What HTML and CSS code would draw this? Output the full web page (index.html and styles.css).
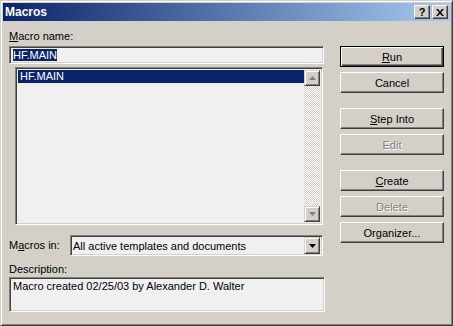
FILE: index.html
```html
<!DOCTYPE html>
<html lang="en">
<head>
  <meta charset="UTF-8">
  <title>Macros</title>
  <link rel="stylesheet" href="styles.css">
</head>
<body>
  <div class="window">
    <div class="titlebar">
      <span class="title">Macros</span>
      <div class="title-buttons">
        <span class="tbtn help">?</span>
        <span class="tbtn">
          <svg width="8" height="7" viewBox="0 0 8 7"><path d="M0 0h2l2 2.5L6 0h2L5 3.5 8 7H6L4 4.5 2 7H0l3-3.5z" fill="#000"/></svg>
        </span>
      </div>
    </div>

    <div class="content">
      <div class="left">
        <div class="label"><u>M</u>acro name:</div>
        <div class="field name-field"><span class="sel">HF.MAIN</span></div>

        <div class="field listbox">
          <div class="items">
            <div class="item selected">HF.MAIN</div>
          </div>
          <div class="scrollbar">
            <span class="sbtn">
              <svg width="7" height="4" viewBox="0 0 7 4"><path d="M3.5 0 7 4H0z" fill="#808080"/></svg>
            </span>
            <span class="track"></span>
            <span class="sbtn">
              <svg width="7" height="4" viewBox="0 0 7 4"><path d="M0 0h7L3.5 4z" fill="#808080"/></svg>
            </span>
          </div>
        </div>

        <div class="combo-row">
          <span class="label">M<u>a</u>cros in:</span>
          <div class="field combo">
            <span class="combo-text">All active templates and documents</span>
            <span class="sbtn">
              <svg width="7" height="4" viewBox="0 0 7 4"><path d="M0 0h7L3.5 4z" fill="#000"/></svg>
            </span>
          </div>
        </div>

        <div class="label desc-label">Description:</div>
        <div class="field desc">Macro created 02/25/03 by Alexander D. Walter</div>
      </div>

      <div class="right">
        <div class="group">
          <span class="btn default"><u>R</u>un</span>
          <span class="btn">Cancel</span>
        </div>
        <div class="group">
          <span class="btn"><u>S</u>tep Into</span>
          <span class="btn disabled">Edit</span>
        </div>
        <div class="group">
          <span class="btn"><u>C</u>reate</span>
          <span class="btn disabled">Delete</span>
          <span class="btn">Or<u>g</u>anizer...</span>
        </div>
      </div>
    </div>
  </div>
</body>
</html>
```

FILE: styles.css
```css
body {
  margin: 0;
  font-family: "Liberation Sans", Arial, sans-serif;
  font-size: 11px;
  color: #000;
  background-color: #d4d0c8;
}
.window {
  width: 453px;
  height: 326px;
  box-sizing: border-box;
  background-color: #d4d0c8;
  border: 1px solid;
  border-color: #d4d0c8 #404040 #404040 #d4d0c8;
  box-shadow: inset 1px 1px #fff, inset -1px -1px #808080;
  padding: 2px;
}
.titlebar {
  height: 18px;
  background: linear-gradient(to right, #0a246a, #a6caf0);
  color: white;
  display: flex;
  justify-content: space-between;
  align-items: center;
}
.title {
  font-weight: bold;
  font-size: 12px;
  padding-left: 2px;
}
.title-buttons {
  display: flex;
  gap: 2px;
  padding-right: 2px;
}
.tbtn {
  width: 16px;
  height: 14px;
  box-sizing: border-box;
  background-color: #d4d0c8;
  border: 1px solid;
  border-color: #fff #404040 #404040 #fff;
  box-shadow: inset -1px -1px #808080;
  display: flex;
  align-items: center;
  justify-content: center;
  color: #000;
  font-weight: bold;
  font-size: 11px;
  line-height: 12px;
}
.content {
  display: flex;
  gap: 15px;
  padding: 9px 0 0 6px;
}
.left {
  width: 316px;
  display: flex;
  flex-direction: column;
}
.label {
  line-height: 13px;
}
.field {
  box-sizing: border-box;
  background-color: #f0f0f0;
  border: 1px solid;
  border-color: #808080 #fff #fff #808080;
  box-shadow: inset 1px 1px #404040, inset -1px -1px #d4d0c8;
}
.name-field {
  margin-top: 3px;
  width: 315px;
  height: 18px;
  padding: 2px 2px 0 3px;
  line-height: 13px;
}
.sel {
  background-color: #0a246a;
  color: white;
}
.listbox {
  margin: 3px 0 0 6px;
  width: 308px;
  height: 158px;
  padding: 2px;
  display: flex;
}
.items {
  flex: 1;
}
.item {
  line-height: 13px;
  padding-left: 2px;
}
.item.selected {
  background-color: #0a246a;
  color: white;
}
.scrollbar {
  width: 16px;
  display: flex;
  flex-direction: column;
}
.track {
  flex: 1;
  background-image: repeating-conic-gradient(#d4d0c8 0 25%, #fff 0 50%);
  background-size: 2px 2px;
}
.sbtn {
  width: 16px;
  height: 16px;
  box-sizing: border-box;
  background-color: #d4d0c8;
  border: 1px solid;
  border-color: #d4d0c8 #404040 #404040 #d4d0c8;
  box-shadow: inset 1px 1px #fff, inset -1px -1px #808080;
  display: flex;
  align-items: center;
  justify-content: center;
}
.combo-row {
  margin-top: 10px;
  display: flex;
  align-items: center;
  justify-content: space-between;
  width: 314px;
}
.combo {
  width: 253px;
  height: 21px;
  padding: 2px;
  display: flex;
  align-items: center;
}
.combo-text {
  flex: 1;
}
.combo .sbtn {
  height: 17px;
}
.desc-label {
  margin-top: 7px;
}
.desc {
  margin-top: 1px;
  width: 316px;
  height: 35px;
  padding: 2px 3px;
  line-height: 13px;
}
.right {
  width: 104px;
  padding-top: 16px;
  display: flex;
  flex-direction: column;
  gap: 15px;
}
.group {
  display: flex;
  flex-direction: column;
  gap: 5px;
}
.btn {
  height: 21px;
  box-sizing: border-box;
  border: 1px solid;
  border-color: #fff #404040 #404040 #fff;
  box-shadow: inset -1px -1px #808080;
  display: flex;
  align-items: center;
  justify-content: center;
}
.btn.default {
  border-color: #000;
  box-shadow: inset 1px 1px #fff, inset -1px -1px #404040, inset -2px -2px #808080;
}
.btn.disabled {
  color: #808080;
  text-shadow: 1px 1px #fff;
}
```
